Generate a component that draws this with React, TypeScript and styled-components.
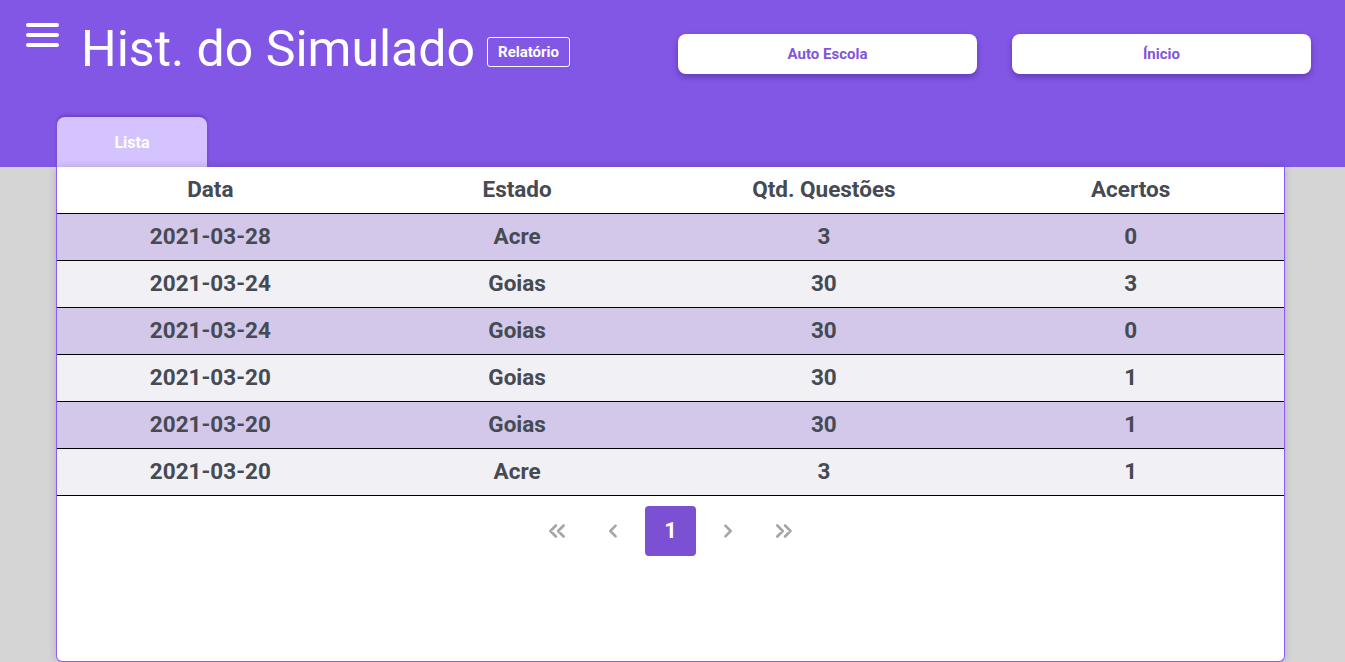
import React from "react";
import styled, { createGlobalStyle } from "styled-components";

const GlobalStyle = createGlobalStyle`
  * { box-sizing: border-box; }
  html, body { margin: 0; padding: 0; }
  body {
    font-family: Roboto, "Liberation Sans", Arial, sans-serif;
    background: #d5d5d5;
    overflow: hidden;
  }
`;

const Page = styled.div`
  width: 1345px;
  height: 662px;
  display: flex;
  flex-direction: column;
  background: #d5d5d5;
  overflow: hidden;
`;

const Header = styled.header`
  height: 167px;
  background: #8257e5;
  display: flex;
  flex-direction: column;
  justify-content: space-between;
  flex-shrink: 0;
`;

const TopBar = styled.div`
  display: flex;
  align-items: flex-start;
  padding: 23px 34px 0 26px;
`;

const Menu = styled.div`
  width: 33px;
  display: flex;
  flex-direction: column;
  gap: 6px;
  margin-right: 22px;
`;

const MenuBar = styled.span`
  display: block;
  height: 4px;
  border-radius: 2px;
  background: #ffffff;
`;

const Title = styled.h1`
  margin: 0;
  font-size: 50px;
  font-weight: 400;
  color: #ffffff;
  line-height: 52px;
`;

const Badge = styled.span`
  margin: 14px 0 0 12px;
  height: 30px;
  padding: 0 10px;
  display: flex;
  align-items: center;
  border: 1px solid #ffffff;
  border-radius: 3px;
  color: #ffffff;
  font-size: 15px;
  font-weight: 700;
`;

const Actions = styled.div`
  margin-left: auto;
  margin-top: 11px;
  display: flex;
  gap: 35px;
`;

const ActionButton = styled.button`
  width: 299px;
  height: 40px;
  border: none;
  border-radius: 8px;
  background: #ffffff;
  color: #7f55de;
  font-family: inherit;
  font-size: 15px;
  font-weight: 700;
  box-shadow: 0 3px 6px rgba(40, 10, 100, 0.35);
  cursor: pointer;
`;

const Tabs = styled.div`
  display: flex;
  padding-left: 57px;
`;

const Tab = styled.div`
  width: 150px;
  height: 50px;
  display: flex;
  align-items: center;
  justify-content: center;
  background: #d5c3ff;
  border-radius: 8px 8px 0 0;
  color: #ffffff;
  font-size: 16px;
  font-weight: 700;
  box-shadow: 0 -2px 3px rgba(60, 20, 140, 0.35);
`;

const Main = styled.main`
  flex: 1;
  padding-left: 56px;
  min-height: 0;
`;

const Card = styled.section`
  width: 1229px;
  height: 495px;
  background: #ffffff;
  border: 1px solid #8b5cf6;
  border-top: none;
  border-radius: 0 0 6px 6px;
  box-shadow: 0 0 8px rgba(0, 0, 0, 0.18);
  display: flex;
  flex-direction: column;
`;

const Table = styled.table`
  width: 100%;
  border-collapse: collapse;
  table-layout: fixed;
  color: #454a53;
`;

const HeadCell = styled.th`
  height: 46px;
  font-size: 22.5px;
  font-weight: 700;
  text-align: center;
  border-bottom: 1px solid #000000;
  padding: 0 0 2px;
`;

const Row = styled.tr<{ $alt: boolean }>`
  background: ${(p) => (p.$alt ? "#f0f0f5" : "#d3c8ea")};
`;

const Cell = styled.td`
  height: 47px;
  font-size: 22.5px;
  font-weight: 700;
  text-align: center;
  border-bottom: 1px solid #000000;
  padding: 0 0 2px;
`;

const Pagination = styled.nav`
  display: flex;
  justify-content: center;
  gap: 6px;
  padding-top: 10px;
`;

const PageItem = styled.div<{ $active?: boolean }>`
  width: 51px;
  height: 50px;
  display: flex;
  align-items: center;
  justify-content: center;
  border-radius: 4px;
  background: ${(p) => (p.$active ? "#7b50d3" : "transparent")};
  color: ${(p) => (p.$active ? "#ffffff" : "#a8a8b3")};
  font-size: 22px;
  font-weight: 700;
`;

const Chevron = ({ dir, double }: { dir: "left" | "right"; double?: boolean }) => {
  const single = dir === "left" ? "M10 4 L5 9 L10 14" : "M6 4 L11 9 L6 14";
  const doubleL = "M9 4 L4 9 L9 14 M16 4 L11 9 L16 14";
  const doubleR = "M3 4 L8 9 L3 14 M10 4 L15 9 L10 14";
  const d = double ? (dir === "left" ? doubleL : doubleR) : single;
  return (
    <svg width={double ? 22 : 17} height="20" viewBox={double ? "0 0 20 18" : "0 0 16 18"} fill="none">
      <path d={d} stroke="#a3a6ab" strokeWidth="2.4" strokeLinecap="round" strokeLinejoin="round" />
    </svg>
  );
};

const rows = [
  ["2021-03-28", "Acre", "3", "0"],
  ["2021-03-24", "Goias", "30", "3"],
  ["2021-03-24", "Goias", "30", "0"],
  ["2021-03-20", "Goias", "30", "1"],
  ["2021-03-20", "Goias", "30", "1"],
  ["2021-03-20", "Acre", "3", "1"],
];

export default function App() {
  return (
    <>
      <GlobalStyle />
      <Page>
        <Header>
          <TopBar>
            <Menu>
              <MenuBar />
              <MenuBar />
              <MenuBar />
            </Menu>
            <Title>Hist. do Simulado</Title>
            <Badge>Relatório</Badge>
            <Actions>
              <ActionButton>Auto Escola</ActionButton>
              <ActionButton>Ínicio</ActionButton>
            </Actions>
          </TopBar>
          <Tabs>
            <Tab>Lista</Tab>
          </Tabs>
        </Header>
        <Main>
          <Card>
            <Table>
              <thead>
                <tr>
                  <HeadCell>Data</HeadCell>
                  <HeadCell>Estado</HeadCell>
                  <HeadCell>Qtd. Questões</HeadCell>
                  <HeadCell>Acertos</HeadCell>
                </tr>
              </thead>
              <tbody>
                {rows.map((r, i) => (
                  <Row key={i} $alt={i % 2 === 1}>
                    {r.map((c, j) => (
                      <Cell key={j}>{c}</Cell>
                    ))}
                  </Row>
                ))}
              </tbody>
            </Table>
            <Pagination>
              <PageItem><Chevron dir="left" double /></PageItem>
              <PageItem><Chevron dir="left" /></PageItem>
              <PageItem $active>1</PageItem>
              <PageItem><Chevron dir="right" /></PageItem>
              <PageItem><Chevron dir="right" double /></PageItem>
            </Pagination>
          </Card>
        </Main>
      </Page>
    </>
  );
}
